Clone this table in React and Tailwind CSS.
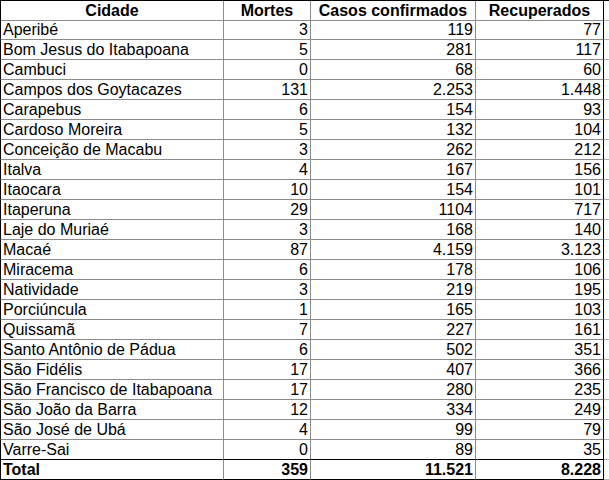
import React from "react";

const rows = [
  ["Aperibé", "3", "119", "77"],
  ["Bom Jesus do Itabapoana", "5", "281", "117"],
  ["Cambuci", "0", "68", "60"],
  ["Campos dos Goytacazes", "131", "2.253", "1.448"],
  ["Carapebus", "6", "154", "93"],
  ["Cardoso Moreira", "5", "132", "104"],
  ["Conceição de Macabu", "3", "262", "212"],
  ["Italva", "4", "167", "156"],
  ["Itaocara", "10", "154", "101"],
  ["Itaperuna", "29", "1104", "717"],
  ["Laje do Muriaé", "3", "168", "140"],
  ["Macaé", "87", "4.159", "3.123"],
  ["Miracema", "6", "178", "106"],
  ["Natividade", "3", "219", "195"],
  ["Porciúncula", "1", "165", "103"],
  ["Quissamã", "7", "227", "161"],
  ["Santo Antônio de Pádua", "6", "502", "351"],
  ["São Fidélis", "17", "407", "366"],
  ["São Francisco de Itabapoana", "17", "280", "235"],
  ["São João da Barra", "12", "334", "249"],
  ["São José de Ubá", "4", "99", "79"],
  ["Varre-Sai", "0", "89", "35"],
];

const grid = "grid grid-cols-[224px_87px_165px_128px_5px] h-[20px]";
const cell = "h-[20px] leading-[19px] border-r border-b border-[#8c8c8c] overflow-hidden whitespace-nowrap";

export default function App() {
  return (
    <div
      className="w-[609px] h-[480px] bg-white text-black text-[16px] overflow-hidden"
      style={{ fontFamily: '"Liberation Sans", Arial, sans-serif' }}
    >
      {/* header */}
      <div className={grid + " border-t border-black"}>
        <div className={cell + " border-l border-l-black font-bold text-center"}>Cidade</div>
        <div className={cell + " font-bold text-center"}>Mortes</div>
        <div className={cell + " font-bold text-center"}>Casos confirmados</div>
        <div className={cell + " border-r-black font-bold text-center"}>Recuperados</div>
        <div className="border-b border-[#b0b0b0]" />
      </div>

      {rows.map((r, i) => (
        <div key={i} className={grid}>
          <div className={cell + " border-l border-l-black pl-[2px]" + (i === rows.length - 1 ? " border-b-black" : "")}>
            {r[0]}
          </div>
          <div className={cell + " text-right pr-[2px]" + (i === rows.length - 1 ? " border-b-black" : "")}>{r[1]}</div>
          <div className={cell + " text-right pr-[2px]" + (i === rows.length - 1 ? " border-b-black" : "")}>{r[2]}</div>
          <div className={cell + " border-r-black text-right pr-[2px]" + (i === rows.length - 1 ? " border-b-black" : "")}>
            {r[3]}
          </div>
          <div className="border-b border-[#b0b0b0]" />
        </div>
      ))}

      {/* total */}
      <div className={grid}>
        <div className={cell + " border-l border-l-black border-b-black font-bold pl-[2px]"}>Total</div>
        <div className={cell + " border-b-black font-bold text-right pr-[2px]"}>359</div>
        <div className={cell + " border-b-black font-bold text-right pr-[2px]"}>11.521</div>
        <div className={cell + " border-r-black border-b-black font-bold text-right pr-[2px]"}>8.228</div>
        <div className="border-b border-[#b0b0b0]" />
      </div>
    </div>
  );
}
